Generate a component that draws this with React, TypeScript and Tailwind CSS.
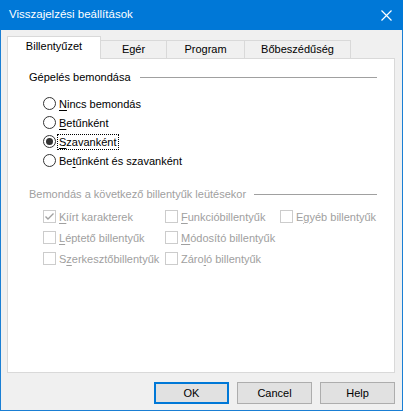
import React from "react";

const font = { fontFamily: '"Liberation Sans", Arial, sans-serif' };

function Radio({ checked }: { checked?: boolean }) {
  return (
    <svg width="13" height="13" viewBox="0 0 13 13" className="shrink-0">
      <circle cx="6.5" cy="6.5" r="6" fill="#fff" stroke="#333" strokeWidth="1" />
      {checked && <circle cx="6.5" cy="6.5" r="3.5" fill="#333" />}
    </svg>
  );
}

function Check({ checked }: { checked?: boolean }) {
  return (
    <svg width="13" height="13" viewBox="0 0 13 13" className="shrink-0">
      <rect x="0.5" y="0.5" width="12" height="12" fill="#fff" stroke="#cccccc" />
      {checked && (
        <path d="M2.5 6.5 L5 9 L10.5 3.5" fill="none" stroke="#a0a0a0" strokeWidth="1.4" />
      )}
    </svg>
  );
}

function U({ children }: { children: React.ReactNode }) {
  return <span className="underline underline-offset-[2px]">{children}</span>;
}

function RadioRow({ checked, focus, children }: { checked?: boolean; focus?: boolean; children: React.ReactNode }) {
  return (
    <div className="flex items-center h-[19px] gap-[2px]">
      <Radio checked={checked} />
      <span
        className={
          "leading-[14px] px-[1px] " + (focus ? "outline outline-1 outline-dotted outline-black" : "")
        }
      >
        {children}
      </span>
    </div>
  );
}

function CheckRow({ checked, children }: { checked?: boolean; children: React.ReactNode }) {
  return (
    <div className="flex items-center h-[21px] gap-[3px] text-[#a0a0a0]">
      <Check checked={checked} />
      <span className="leading-[14px] whitespace-nowrap">{children}</span>
    </div>
  );
}

export default function App() {
  return (
    <div
      style={font}
      className="w-[403px] h-[411px] bg-[#f0f0f0] border-x border-b border-[#1a7fd4] flex flex-col text-[11px] text-black"
    >
      <div className="h-[30px] -mx-px bg-[#0078d7] flex items-center justify-between pl-[9px] pr-[11px] text-white">
        <span className="text-[11.5px]">Visszajelzési beállítások</span>
        <svg width="11" height="11" viewBox="0 0 11 11">
          <path d="M0.5 0.5 L10.5 10.5 M10.5 0.5 L0.5 10.5" stroke="#fff" strokeWidth="1.2" />
        </svg>
      </div>

      <div className="flex items-end h-[22px] mt-[6px] ml-[6px]">
        <div className="relative z-10 h-[23px] -mb-px w-[94px] bg-white border-x border-t border-[#d9d9d9] flex items-center justify-center pb-[3px]">
          Billentyűzet
        </div>
        <div className="h-[18px] w-[66px] border-t border-r border-[#d9d9d9] flex items-center justify-center">
          Egér
        </div>
        <div className="h-[18px] w-[78px] border-t border-r border-[#d9d9d9] flex items-center justify-center">
          Program
        </div>
        <div className="h-[18px] w-[106px] border-t border-r border-[#d9d9d9] flex items-center justify-center">
          Bőbeszédűség
        </div>
      </div>

      <div className="h-[315px] ml-[6px] mr-[7px] bg-white border border-[#d9d9d9] pl-[21px] pr-[17px] pt-[10px]">
        <div className="flex items-center h-[16px] gap-[9px]">
          <span className="whitespace-nowrap">Gépelés bemondása</span>
          <div className="flex-1 h-px bg-[#a0a0a0]" />
        </div>
        <div className="mt-[9px] ml-[14px] flex flex-col">
          <RadioRow>
            <U>N</U>incs bemondás
          </RadioRow>
          <RadioRow>
            <U>B</U>etűnként
          </RadioRow>
          <RadioRow checked focus>
            <U>S</U>zavanként
          </RadioRow>
          <RadioRow>
            Be<U>t</U>űnként és szavanként
          </RadioRow>
        </div>

        <div className="mt-[16px] flex items-center h-[16px] gap-[8px] text-[#a0a0a0]">
          <span className="whitespace-nowrap">Bemondás a következő billentyűk leütésekor</span>
          <div className="flex-1 h-px bg-[#a0a0a0]" />
        </div>
        <div className="mt-[4px] ml-[14px] grid grid-cols-[122px_115px_auto]">
          <CheckRow checked>
            <U>K</U>iírt karakterek
          </CheckRow>
          <CheckRow>
            <U>F</U>unkcióbillentyűk
          </CheckRow>
          <CheckRow>
            E<U>g</U>yéb billentyűk
          </CheckRow>
          <CheckRow>
            <U>L</U>éptető billentyűk
          </CheckRow>
          <CheckRow>
            <U>M</U>ódosító billentyűk
          </CheckRow>
          <div />
          <CheckRow>
            S<U>z</U>erkesztőbillentyűk
          </CheckRow>
          <CheckRow>
            Záro<U>l</U>ó billentyűk
          </CheckRow>
          <div />
        </div>
      </div>

      <div className="mt-[9px] mr-[7px] flex justify-end gap-[8px]">
        <button className="w-[75px] h-[22px] bg-[#e1e1e1] border-2 border-[#0078d7] flex items-center justify-center">
          OK
        </button>
        <button className="w-[75px] h-[22px] bg-[#e1e1e1] border border-[#adadad] flex items-center justify-center">
          Cancel
        </button>
        <button className="w-[75px] h-[22px] bg-[#e1e1e1] border border-[#adadad] flex items-center justify-center">
          Help
        </button>
      </div>
    </div>
  );
}
